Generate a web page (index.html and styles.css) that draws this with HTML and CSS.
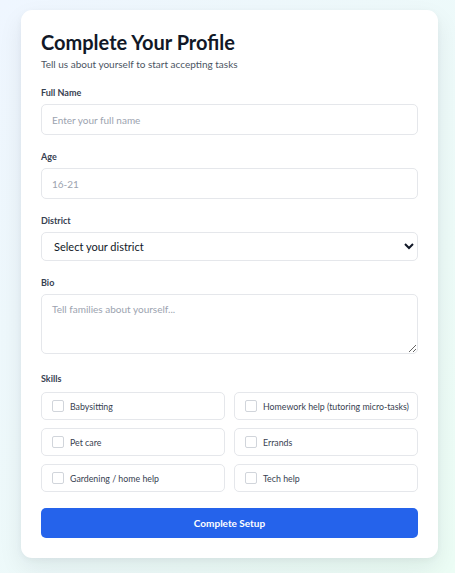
FILE: index.html
```html
<!DOCTYPE HTML>
<html>

<head>
  <meta charset="utf-8">
  <link rel="stylesheet" href="styles.css">
</head>

<body>
<div class="card">
  <h1 class="title">Complete Your Profile</h1>
  <p class="subtitle">Tell us about yourself to start accepting tasks</p>

  <form class="profile-form">
    <div class="field">
      <label class="field-label" for="full-name">Full Name</label>
      <input class="field-input" id="full-name" type="text" placeholder="Enter your full name">
    </div>

    <div class="field">
      <label class="field-label" for="age">Age</label>
      <input class="field-input" id="age" type="text" placeholder="16-21">
    </div>

    <div class="field">
      <label class="field-label" for="district">District</label>
      <select class="field-input field-select" id="district">
        <option>Select your district</option>
      </select>
    </div>

    <div class="field">
      <label class="field-label" for="bio">Bio</label>
      <textarea class="field-input field-textarea" id="bio" placeholder="Tell families about yourself..."></textarea>
    </div>

    <div class="field field-skills">
      <span class="field-label">Skills</span>
      <div class="skills">
        <label class="skill"><input type="checkbox" class="skill-box"><span>Babysitting</span></label>
        <label class="skill"><input type="checkbox" class="skill-box"><span>Homework help (tutoring micro-tasks)</span></label>
        <label class="skill"><input type="checkbox" class="skill-box"><span>Pet care</span></label>
        <label class="skill"><input type="checkbox" class="skill-box"><span>Errands</span></label>
        <label class="skill"><input type="checkbox" class="skill-box"><span>Gardening / home help</span></label>
        <label class="skill"><input type="checkbox" class="skill-box"><span>Tech help</span></label>
      </div>
    </div>

    <button class="submit" type="button">Complete Setup</button>
  </form>
</div>
</body>

</html>
```

FILE: styles.css
```css
html {
  min-height: 100%;
  background: linear-gradient(to bottom right, #eff6ff, #ecfdf5);
}

body {
  margin: 0;
  padding: 10px 17px 15px 21px;
  font-family: Lato, "Noto Sans", sans-serif;
  color: #1f2937;
}

.card {
  background: #fff;
  border-radius: 11px;
  padding: 20px;
  box-shadow: 0 10px 24px rgba(15, 23, 42, 0.08), 0 2px 6px rgba(15, 23, 42, 0.04);
}

.title {
  margin: 0;
  font-size: 20px;
  line-height: 24px;
  font-weight: 700;
  color: #111827;
}

.subtitle {
  margin: 3px 0 0;
  font-size: 10px;
  line-height: 14px;
  color: #4b5563;
}

.profile-form {
  margin-top: 15px;
}

.field {
  margin-bottom: 15px;
}

.field-label {
  display: block;
  margin-bottom: 4px;
  font-size: 9px;
  line-height: 14px;
  font-weight: 700;
  color: #374151;
}

.field-input {
  display: block;
  box-sizing: border-box;
  width: 100%;
  height: 31px;
  margin: 0;
  padding: 0 10px;
  border: 1px solid #e5e7eb;
  border-radius: 5px;
  font-family: inherit;
  font-size: 10px;
  color: #111827;
  background: #fff;
  outline: none;
}

.field-input::placeholder {
  color: #9ca3af;
}

.field-select {
  height: 29px;
  padding: 0 8px;
  font-size: 11px;
}

.field-textarea {
  height: 60px;
  padding: 8px 10px;
  resize: vertical;
}

.field-skills {
  margin-top: 18px;
  margin-bottom: 16px;
}

.skills {
  display: grid;
  grid-template-columns: minmax(0, 1fr) minmax(0, 1fr);
  gap: 8px 9px;
  margin-top: 6px;
}

.skill {
  display: flex;
  align-items: center;
  gap: 6px;
  box-sizing: border-box;
  height: 28px;
  padding: 0 10px;
  border: 1px solid #e5e7eb;
  border-radius: 5px;
  font-size: 8.8px;
  color: #374151;
  white-space: nowrap;
}

.skill-box {
  appearance: none;
  width: 12px;
  height: 12px;
  margin: 0;
  border: 1px solid #d1d5db;
  border-radius: 2px;
  background: #fff;
  flex: none;
}

.submit {
  display: block;
  width: 100%;
  height: 30px;
  border: none;
  border-radius: 5px;
  background: #2563eb;
  color: #fff;
  font-family: inherit;
  font-size: 10px;
  font-weight: 700;
}
```
